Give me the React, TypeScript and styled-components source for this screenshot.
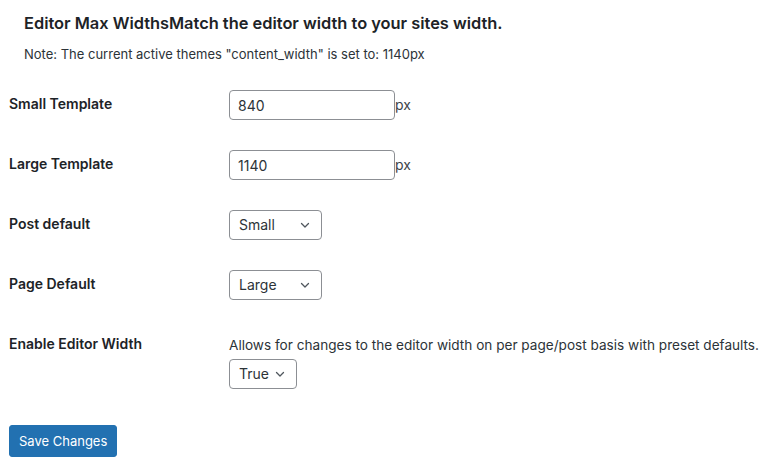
import React from "react";
import styled, { createGlobalStyle } from "styled-components";

const Global = createGlobalStyle`
  html, body { margin: 0; padding: 0; background: #ffffff; }
  body {
    font-family: Inter, "Noto Sans", "Liberation Sans", sans-serif;
    color: #1d2327;
    font-size: 13px;
    line-height: 1.4;
  }
  * { box-sizing: border-box; }
`;

const Page = styled.div`
  padding: 0 9px;
  width: 772px;
`;

const Heading = styled.h2`
  margin: 0;
  padding: 13px 0 0 15px;
  font-size: 16.4px;
  font-weight: 600;
  line-height: 21px;
  color: #1d2327;
`;

const Note = styled.p`
  margin: 0;
  padding: 11px 0 0 15px;
  font-size: 13px;
  line-height: 18px;
  color: #2c3338;
`;

const FormTable = styled.div`
  margin-top: 12px;
  display: grid;
  grid-template-columns: 220px 1fr;
`;

const Label = styled.div`
  padding: 20px 10px 20px 0;
  font-size: 14px;
  font-weight: 600;
  line-height: 18px;
  color: #1d2327;
`;

const Cell = styled.div`
  padding: 15px 0;
  font-size: 14px;
  line-height: 18px;
`;

const InputRow = styled.div`
  display: flex;
  align-items: center;
`;

const TextInput = styled.input`
  width: 166px;
  height: 30px;
  padding: 0 8px;
  border: 1px solid #8c8f94;
  border-radius: 4px;
  font-family: inherit;
  font-size: 14px;
  color: #2c3338;
  background: #fff;
  outline: none;
`;

const Unit = styled.span`
  font-size: 14px;
  color: #3c434a;
`;

const Select = styled.div<{ $w: number }>`
  width: ${(p) => p.$w}px;
  height: 30px;
  display: flex;
  align-items: center;
  justify-content: space-between;
  padding: 0 10px 0 9px;
  border: 1px solid #8c8f94;
  border-radius: 4px;
  font-size: 14px;
  color: #2c3338;
  background: #fff;
`;

const Description = styled.div`
  margin: 5px 0 4px;
  font-size: 13.6px;
  line-height: 20px;
  white-space: nowrap;
  color: #2c3338;
`;

const Submit = styled.div`
  padding: 21px 0 0;
`;

const Button = styled.button`
  height: 32px;
  padding: 0 9px;
  border: 1px solid #2271b1;
  border-radius: 3px;
  background: #2271b1;
  color: #fff;
  font-family: inherit;
  font-size: 13px;
  cursor: pointer;
`;

const Chevron = () => (
  <svg width="12" height="12" viewBox="0 0 12 12" fill="none">
    <path d="M2.5 4.5 L6 8 L9.5 4.5" stroke="#50575e" strokeWidth="1.3" strokeLinecap="round" strokeLinejoin="round" />
  </svg>
);

const Dropdown = ({ value, w }: { value: string; w: number }) => (
  <Select $w={w} role="combobox">
    <span>{value}</span>
    <Chevron />
  </Select>
);

export default function App() {
  return (
    <Page>
      <Global />
      <Heading>Editor Max WidthsMatch the editor width to your sites width.</Heading>
      <Note>Note: The current active themes "content_width" is set to: 1140px</Note>
      <FormTable>
        <Label>Small Template</Label>
        <Cell>
          <InputRow>
            <TextInput defaultValue="840" />
            <Unit>px</Unit>
          </InputRow>
        </Cell>
        <Label>Large Template</Label>
        <Cell>
          <InputRow>
            <TextInput defaultValue="1140" />
            <Unit>px</Unit>
          </InputRow>
        </Cell>
        <Label>Post default</Label>
        <Cell>
          <Dropdown value="Small" w={93} />
        </Cell>
        <Label>Page Default</Label>
        <Cell>
          <Dropdown value="Large" w={93} />
        </Cell>
        <Label>Enable Editor Width</Label>
        <Cell>
          <Description>Allows for changes to the editor width on per page/post basis with preset defaults.</Description>
          <Dropdown value="True" w={68} />
        </Cell>
      </FormTable>
      <Submit>
        <Button>Save Changes</Button>
      </Submit>
    </Page>
  );
}
